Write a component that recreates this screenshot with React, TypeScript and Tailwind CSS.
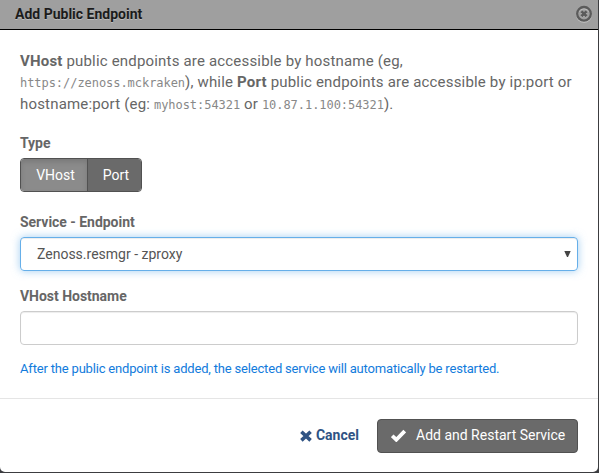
import React from "react";

function Code({ children }: { children: React.ReactNode }) {
  return (
    <code className="font-['DejaVu_Sans_Mono',monospace] text-[12px] tracking-[-0.05px] text-[#888]">
      {children}
    </code>
  );
}

function CloseIcon() {
  return (
    <svg width="18" height="18" viewBox="0 0 18 18" fill="none">
      <circle cx="9" cy="9.8" r="6.8" stroke="#c4c4c4" strokeWidth="2.4" />
      <circle cx="9" cy="8.8" r="6.8" stroke="#5b5b5b" strokeWidth="2.4" />
      <path d="M6.4 7.4 11.6 12 M11.6 7.4 6.4 12" stroke="#bdbdbd" strokeWidth="2.2" />
      <path d="M6.4 6.4 11.6 11.2 M11.6 6.4 6.4 11.2" stroke="#5b5b5b" strokeWidth="2.6" />
    </svg>
  );
}

export default function App() {
  return (
    <div className="h-[473px] w-[599px] overflow-hidden bg-[#3c3d40] font-['Roboto',sans-serif] text-[15px] text-[#666]">
      <div className="flex h-[472px] w-[598px] flex-col overflow-hidden rounded-b-[5px] bg-white">
        <header className="flex h-[30px] shrink-0 items-center justify-between border-b border-black bg-[#9f9f9f] pr-[5px] pb-[1px] pl-[15px]">
          <h1 className="text-[14px] leading-5 font-bold text-[#1b1b1b] [text-shadow:0_1px_0_#bbb]">
            Add Public Endpoint
          </h1>
          <CloseIcon />
        </header>

        <main className="flex h-[369px] shrink-0 flex-col border-b border-[#e5e5e5] px-5 pt-[21px]">
          <div className="leading-[21px] tracking-[0.18px] whitespace-nowrap">
            <p><b>VHost</b> public endpoints are accessible by hostname (eg,</p>
            <p><Code>https://zenoss.mckraken</Code>), while <b>Port</b> public endpoints are accessible by ip:port or</p>
            <p>hostname:port (eg: <Code>myhost:54321</Code> or <Code>10.87.1.100:54321</Code>).</p>
          </div>

          <div className="mt-[17px] text-[14px] leading-5 font-bold tracking-[-0.03px]">Type</div>
          <div className="mt-[5px] flex h-[34px] w-[122px] shrink-0 overflow-hidden rounded-[4px] border border-[#515151] text-[14px] text-white">
            <button className="w-[67px] border-r border-[#515151] bg-[#8b8b8b] pl-[3px] shadow-[inset_0_3px_5px_rgba(0,0,0,0.125)]">VHost</button>
            <button className="flex-1 bg-[#6a6a6a] pl-[3px]">Port</button>
          </div>

          <label className="mt-[20px] text-[14px] leading-5 font-bold tracking-[-0.03px]">Service - Endpoint</label>
          <div className="mt-[5px] flex h-[34px] shrink-0 items-center justify-between rounded-[4px] border border-[#66afe9] pr-[6px] pl-[16px] text-[14px] text-[#555] shadow-[inset_0_1px_1px_rgba(0,0,0,0.075),0_0_8px_rgba(102,175,233,0.6)]">
            <span>Zenoss.resmgr - zproxy</span>
            <svg width="7" height="6" viewBox="0 0 7 6" className="-mt-[1px]">
              <path d="M0.3 0H6.7L4 6H3Z" fill="#444" />
            </svg>
          </div>

          <label className="mt-[15px] text-[14px] leading-5 font-bold tracking-[-0.03px]">VHost Hostname</label>
          <input className="mt-[5px] h-[34px] shrink-0 rounded-[4px] border border-[#ccc] px-3 shadow-[inset_0_1px_1px_rgba(0,0,0,0.075)] outline-none" />

          <p className="mt-[14px] text-[13px] leading-5 tracking-[-0.18px] whitespace-nowrap text-[#127bdc]">
            After the public endpoint is added, the selected service will automatically be restarted.
          </p>
        </main>

        <footer className="flex flex-1 items-center justify-end pr-5 text-[14px]">
          <button className="mr-[18px] flex items-center font-bold text-[#2f5384]">
            <svg width="12" height="12" viewBox="0 0 12 12" className="mr-[4px]">
              <path d="M1.4 1.8 10.6 10.4 M10.6 1.8 1.4 10.4" stroke="#2f5384" strokeWidth="3.6" />
            </svg>
            Cancel
          </button>
          <button className="flex h-[34px] w-[201px] items-center rounded-[4px] border border-[#515151] bg-[#6a6a6a] pl-[13px] whitespace-nowrap text-white">
            <svg width="15" height="13" viewBox="0 0 15 13" className="mr-[10px]">
              <path d="M1.2 6.8 5.3 10.7 13.7 2" fill="none" stroke="white" strokeWidth="3.8" />
            </svg>
            Add and Restart Service
          </button>
        </footer>
      </div>
    </div>
  );
}
